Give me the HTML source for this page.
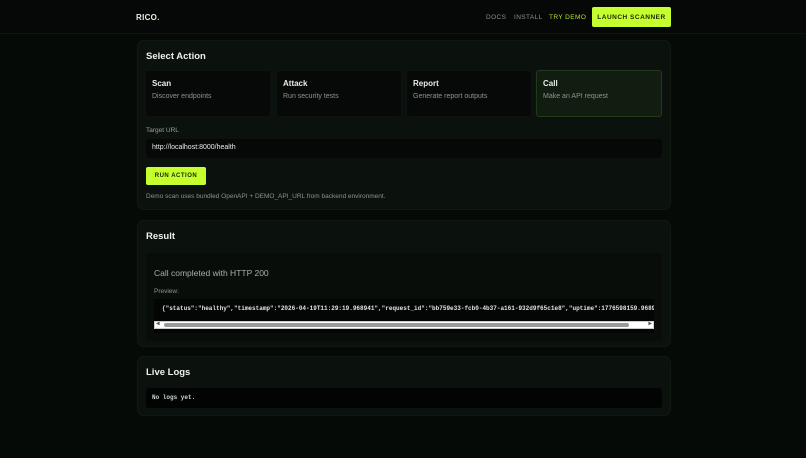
<!DOCTYPE html>
<html><head><meta charset="utf-8"><style>
*{box-sizing:border-box;margin:0;padding:0}
body{width:806px;height:458px;background:#060a07;font-family:"Liberation Sans",sans-serif;color:#e6ebe6;overflow:hidden;position:relative}
.hdr{position:absolute;left:0;top:0;width:806px;height:34px;background:#050806;border-bottom:1px solid #0e150f}
.logo{position:absolute;left:136px;top:13px;font-size:8px;font-weight:bold;letter-spacing:.3px;color:#e8ece8}
.logo span{color:#c6ff2e}
.nav{position:absolute;top:14px;font-size:6.5px;letter-spacing:.4px;color:#8a918a}
.btn{background:#c6ff2e;color:#1a2605;font-weight:bold;letter-spacing:.5px;border-radius:2px;position:absolute;display:flex;align-items:center;justify-content:center}
.card{position:absolute;left:137px;width:534px;background:#0b110c;border:1px solid #101910;border-radius:7px}
h2{position:absolute;left:8px;font-size:9.5px;font-weight:bold;color:#eef1ee}
.opt{position:absolute;top:29px;width:126px;height:47px;background:#060907;border:1px solid #0d140e;border-radius:3px}
.opt b{position:absolute;left:6px;top:8px;font-size:8px;color:#e8ece8}
.opt i{position:absolute;left:6px;top:22px;font-size:7px;font-style:normal;color:#8d948d}
.mono{font-family:"Liberation Mono",monospace}
</style></head><body>
<div class="hdr"></div>
<div class="logo">RICO<span>.</span></div>
<div class="nav" style="left:486px">DOCS</div>
<div class="nav" style="left:514px">INSTALL</div>
<div class="nav" style="left:549px;color:#b5e62a">TRY DEMO</div>
<div class="btn" style="left:592px;top:7px;width:79px;height:20px;font-size:6.5px">LAUNCH SCANNER</div>

<div class="card" style="top:40px;height:170px">
  <h2 style="top:10px">Select Action</h2>
  <div class="opt" style="left:7px"><b>Scan</b><i>Discover endpoints</i></div>
  <div class="opt" style="left:138px"><b>Attack</b><i>Run security tests</i></div>
  <div class="opt" style="left:268px"><b>Report</b><i>Generate report outputs</i></div>
  <div class="opt" style="left:398px;background:#111d10;border-color:#223a1a"><b>Call</b><i>Make an API request</i></div>
  <div style="position:absolute;left:8px;top:86px;font-size:6.5px;color:#9aa29a">Target URL</div>
  <div style="position:absolute;left:8px;top:98px;width:516px;height:19px;background:#050806;border-radius:3px;font-size:7px;color:#e8ece8;padding:5px 6px">http://localhost:8000/health</div>
  <div class="btn" style="left:8px;top:126px;width:60px;height:18px;font-size:6px">RUN ACTION</div>
  <div style="position:absolute;left:8px;top:152px;font-size:6.5px;color:#8d948d">Demo scan uses bundled OpenAPI + DEMO_API_URL from backend environment.</div>
</div>

<div class="card" style="top:220px;height:127px">
  <h2 style="top:10px">Result</h2>
  <div style="position:absolute;left:8px;top:32px;width:516px;height:88px;background:#080d09;border-radius:3px">
    <div style="position:absolute;left:8px;top:15px;font-size:8.5px;color:#a8b0a8">Call completed with HTTP 200</div>
    <div style="position:absolute;left:8px;top:35px;font-size:6.5px;color:#8d948d">Preview:</div>
    <div class="mono" style="position:absolute;left:8px;top:46px;width:500px;height:34px;background:#040605;overflow:hidden">
      <div style="position:absolute;left:8px;top:6px;font-size:6px;color:#e0e5e0;white-space:nowrap;font-weight:bold">{"status":"healthy","timestamp":"2026-04-19T11:29:19.968941","request_id":"bb759e33-fcb0-4b37-a161-932d9f65c1e8","uptime":1776598159.96895</div>
      <div style="position:absolute;left:0;top:22px;width:500px;height:8px;background:#fff;border:1px solid #ccc">
        <div style="position:absolute;left:9px;top:1px;width:465px;height:4px;background:#9a9a9a;border-radius:2px"></div>
        <div style="position:absolute;left:1px;top:-2px;font-size:6px;color:#555">◀</div>
        <div style="position:absolute;right:1px;top:-2px;font-size:6px;color:#555">▶</div>
      </div>
    </div>
  </div>
</div>

<div class="card" style="top:356px;height:60px">
  <h2 style="top:10px">Live Logs</h2>
  <div class="mono" style="position:absolute;left:8px;top:31px;width:516px;height:20px;background:#020403;border-radius:3px;font-size:6px;color:#cfd5cf;padding:6px 6px;font-weight:bold">No logs yet.</div>
</div>
</body></html>
